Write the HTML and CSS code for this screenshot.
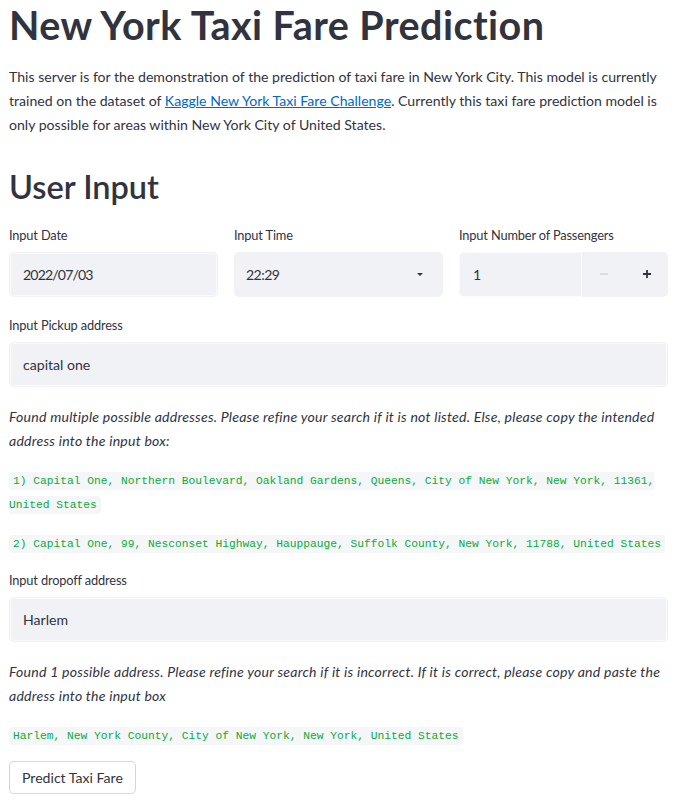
FILE: index.html
```html
<!DOCTYPE html>
<html lang="en">
<head>
<meta charset="utf-8">
<title>New York Taxi Fare Prediction</title>
<link rel="stylesheet" href="styles.css">
</head>
<body>
<main class="page">
  <h1 class="title">New York Taxi Fare Prediction</h1>
  <p class="intro">This server is for the demonstration of the prediction of taxi fare in New York City. This model is currently trained on the dataset of <a href="#">Kaggle New York Taxi Fare Challenge</a>. Currently this taxi fare prediction model is only possible for areas within New York City of United States.</p>
  <h2 class="subtitle">User Input</h2>
  <div class="cols">
    <div class="field">
      <label class="lbl">Input Date</label>
      <div class="box boxed date">2022/07/03</div>
    </div>
    <div class="field">
      <label class="lbl">Input Time</label>
      <div class="box select">
        <span class="digits">22:29</span>
        <svg class="caret" width="6" height="3" viewBox="0 0 6 3"><path d="M0 0h6L3 3z" fill="#31333f"/></svg>
      </div>
    </div>
    <div class="field">
      <label class="lbl">Input Number of Passengers</label>
      <div class="numinput">
        <div class="numfield">1</div>
        <span class="step"><svg width="8" height="8" viewBox="0 0 8 8"><path d="M0 4h8" stroke="#d5d6da" stroke-width="1.6"/></svg></span>
        <span class="step"><svg width="8" height="8" viewBox="0 0 8 8"><path d="M0 4h8M4 0v8" stroke="#31333f" stroke-width="1.8"/></svg></span>
      </div>
    </div>
  </div>
  <div class="field">
    <label class="lbl">Input Pickup address</label>
    <div class="box boxed">capital one</div>
  </div>
  <p class="note">Found multiple possible addresses. Please refine your search if it is not listed. Else, please copy the intended address into the input box:</p>
  <p class="codeline"><code>1) Capital One, Northern Boulevard, Oakland Gardens, Queens, City of New York, New York, 11361, United States</code></p>
  <p class="codeline"><code>2) Capital One, 99, Nesconset Highway, Hauppauge, Suffolk County, New York, 11788, United States</code></p>
  <div class="field">
    <label class="lbl">Input dropoff address</label>
    <div class="box boxed">Harlem</div>
  </div>
  <p class="note">Found 1 possible address. Please refine your search if it is incorrect. If it is correct, please copy and paste the address into the input box</p>
  <p class="codeline"><code>Harlem, New York County, City of New York, New York, United States</code></p>
  <button class="btn" type="button">Predict Taxi Fare</button>
</main>
</body>
</html>
```
FILE: styles.css
```css
body {
  margin: 0;
  background: #ffffff;
  color: #31333f;
  font-family: Lato, "Noto Sans", sans-serif;
  font-size: 14.1px;
}
.page {
  display: flex;
  flex-direction: column;
  gap: 15px;
  padding: 0 8px 0 9px;
}
.title {
  margin: 0;
  padding-top: 1px;
  font-size: 39.5px;
  font-weight: 700;
  line-height: 1.2;
  letter-spacing: 0.45px;
}
.intro {
  margin: 0 0 -2px;
  padding-top: 2px;
  line-height: 24px;
}
.intro a {
  color: #0068c9;
}
.subtitle {
  margin: 16.5px 0 0;
  font-size: 32.5px;
  font-weight: 600;
  line-height: 1.2;
}
.cols {
  display: grid;
  grid-template-columns: repeat(3, 1fr);
  gap: 16px;
  margin-top: 1px;
}
.lbl {
  display: block;
  padding-top: 2px;
  font-size: 12.8px;
  letter-spacing: -0.15px;
  line-height: 22px;
  margin-bottom: 6px;
}
.box {
  box-sizing: border-box;
  height: 45px;
  background: #f0f2f6;
  border-radius: 5px;
  display: flex;
  align-items: center;
  padding-left: 13px;
}
.boxed {
  border: 1px solid #f0f2f6;
  box-shadow: inset 0 0 0 1px #f9fafb;
}
.date {
  letter-spacing: -0.85px;
}
.digits {
  letter-spacing: -0.55px;
}
.select {
  justify-content: space-between;
  padding-left: 12px;
  padding-right: 20px;
}
.caret {
  display: block;
}
.numinput {
  box-sizing: border-box;
  height: 45px;
  display: flex;
  background: #f0f2f6;
  border-radius: 5px;
}
.numfield {
  flex: 1;
  box-sizing: border-box;
  display: flex;
  align-items: center;
  padding-left: 13px;
  border: 1px solid #fafbfc;
  border-radius: 5px 0 0 5px;
}
.step {
  width: 43px;
  display: flex;
  align-items: center;
  justify-content: center;
}
.note {
  margin: 0 0 -3px;
  padding-top: 3px;
  line-height: 24px;
  font-style: italic;
  letter-spacing: 0.22px;
}
.codeline {
  margin: 0 0 -2px;
  padding-top: 2px;
  line-height: 24px;
}
code {
  font-family: "Liberation Mono", monospace;
  font-size: 11.25px;
  line-height: 12px;
  color: #09ab3b;
  background: #f5f6f8;
  padding: 3px 4px;
  border-radius: 4px;
}
.btn {
  align-self: flex-start;
  margin-top: 2px;
  height: 33px;
  padding: 0 12px;
  background: #ffffff;
  border: 1px solid rgba(49, 51, 63, 0.2);
  border-radius: 5px;
  font-family: Lato, "Noto Sans", sans-serif;
  font-size: 14.1px;
  color: #31333f;
}
```
